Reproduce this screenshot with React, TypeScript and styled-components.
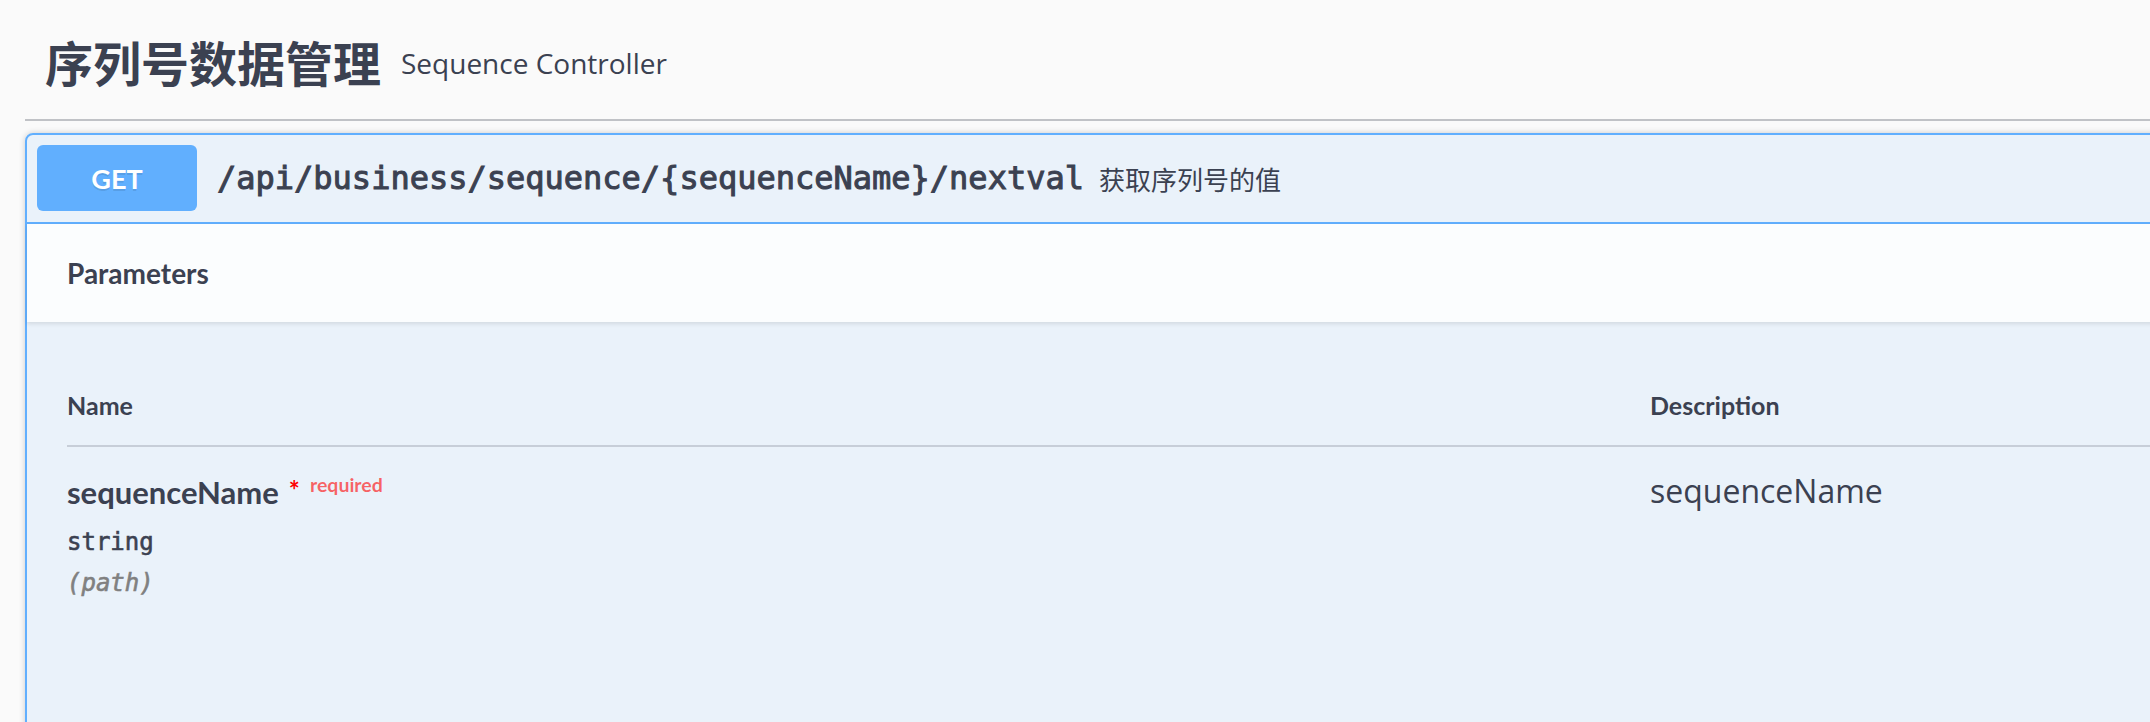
import React from "react";
import styled, { createGlobalStyle } from "styled-components";

const GlobalStyle = createGlobalStyle`
  html, body {
    margin: 0;
    padding: 0;
    background: #fafafa;
    overflow: hidden;
  }
  body {
    font-family: "Open Sans", "Noto Sans", sans-serif;
    color: #3b4151;
  }
`;

const Page = styled.div`
  width: 2400px;
  padding-left: 25px;
  box-sizing: border-box;
`;

const TagHeader = styled.h3`
  display: flex;
  align-items: center;
  box-sizing: border-box;
  height: 121px;
  margin: 0 0 12px;
  padding: 2px 0 0 20px;
  border-bottom: 2px solid rgba(59, 65, 81, 0.3);
`;

const TagTitle = styled.span`
  font-family: "Noto Sans CJK SC", "Noto Sans", sans-serif;
  font-size: 48px;
  font-weight: 700;
  color: #3b4151;
`;

const TagDescription = styled.small`
  font-family: "Open Sans", sans-serif;
  font-size: 28px;
  font-weight: 400;
  color: #3b4151;
  margin-left: 20px;
  padding-top: 4px;
`;

const OpBlock = styled.div`
  border: 2px solid #61affe;
  border-radius: 8px;
  background: rgba(97, 175, 254, 0.1);
  box-shadow: 0 0 6px rgba(0, 0, 0, 0.19);
  min-height: 760px;
`;

const Summary = styled.div`
  display: flex;
  align-items: center;
  padding: 10px 10px 11px;
  border-bottom: 2px solid #61affe;
`;

const MethodBadge = styled.span`
  display: flex;
  align-items: center;
  justify-content: center;
  min-width: 160px;
  height: 66px;
  border-radius: 6px;
  background: #61affe;
  color: #fff;
  font-family: Lato, "Open Sans", sans-serif;
  font-size: 27px;
  font-weight: 700;
  text-shadow: 0 2px 0 rgba(0, 0, 0, 0.1);
`;

const PathText = styled.span`
  font-family: "DejaVu Sans Mono", "Liberation Mono", monospace;
  font-size: 32px;
  font-weight: 400;
  -webkit-text-stroke: 1px #3b4151;
  color: #3b4151;
  padding: 0 15px 0 20px;
`;

const SummaryDescription = styled.span`
  font-family: "Noto Sans CJK SC", "Noto Sans", sans-serif;
  font-size: 26px;
  color: #3b4151;
`;

const SectionHeader = styled.div`
  display: flex;
  align-items: center;
  box-sizing: border-box;
  min-height: 98px;
  padding: 16px 40px;
  background: rgba(255, 255, 255, 0.8);
  box-shadow: 0 2px 4px rgba(0, 0, 0, 0.1);
`;

const SectionTitle = styled.h4`
  margin: 0;
  font-family: Lato, "Open Sans", sans-serif;
  font-size: 28px;
  font-weight: 700;
  color: #3b4151;
`;

const TableContainer = styled.div`
  padding: 42px 40px 40px;
`;

const ParamTable = styled.div`
  display: grid;
  grid-template-columns: 1583px 1fr;
`;

const HeadCell = styled.div`
  font-family: Lato, "Open Sans", sans-serif;
  font-size: 25px;
  font-weight: 700;
  line-height: 34px;
  color: #3b4151;
  padding: 24px 0 23px;
  border-bottom: 2px solid rgba(59, 65, 81, 0.2);
`;

const BodyCell = styled.div`
  padding: 20px 0;
`;

const ParamName = styled.div`
  display: flex;
  align-items: flex-start;
  font-family: Lato, "Open Sans", sans-serif;
  font-size: 31px;
  font-weight: 700;
  line-height: 50px;
  color: #3b4151;
`;

const Asterisk = styled.span`
  color: red;
  font-size: 26px;
  line-height: 24px;
  margin: 11px 0 0 10px;
`;

const RequiredLabel = styled.span`
  color: rgba(255, 0, 0, 0.6);
  font-size: 19.5px;
  line-height: 24px;
  margin: 6px 0 0 10px;
`;

const ParamType = styled.div`
  font-family: "DejaVu Sans Mono", "Liberation Mono", monospace;
  font-size: 24px;
  font-weight: 400;
  -webkit-text-stroke: 0.6px #3b4151;
  line-height: 34px;
  color: #3b4151;
  margin-top: 8px;
`;

const ParamIn = styled.div`
  font-family: "DejaVu Sans Mono", "Liberation Mono", monospace;
  font-size: 24px;
  font-style: italic;
  font-weight: 400;
  -webkit-text-stroke: 0.6px gray;
  line-height: 34px;
  color: gray;
  margin-top: 7px;
`;

const ParamDescription = styled.div`
  font-family: "Open Sans", sans-serif;
  font-size: 32px;
  line-height: 50px;
  color: #3b4151;
  margin-top: -1px;
`;

export default function App() {
  return (
    <>
      <GlobalStyle />
      <Page>
        <TagHeader>
          <TagTitle>序列号数据管理</TagTitle>
          <TagDescription>Sequence Controller</TagDescription>
        </TagHeader>
        <OpBlock>
          <Summary>
            <MethodBadge>GET</MethodBadge>
            <PathText>/api/business/sequence/{"{sequenceName}"}/nextval</PathText>
            <SummaryDescription>获取序列号的值</SummaryDescription>
          </Summary>
          <SectionHeader>
            <SectionTitle>Parameters</SectionTitle>
          </SectionHeader>
          <TableContainer>
            <ParamTable>
              <HeadCell>Name</HeadCell>
              <HeadCell>Description</HeadCell>
              <BodyCell>
                <ParamName>
                  sequenceName
                  <Asterisk>*</Asterisk>
                  <RequiredLabel>required</RequiredLabel>
                </ParamName>
                <ParamType>string</ParamType>
                <ParamIn>(path)</ParamIn>
              </BodyCell>
              <BodyCell>
                <ParamDescription>sequenceName</ParamDescription>
              </BodyCell>
            </ParamTable>
          </TableContainer>
        </OpBlock>
      </Page>
    </>
  );
}
